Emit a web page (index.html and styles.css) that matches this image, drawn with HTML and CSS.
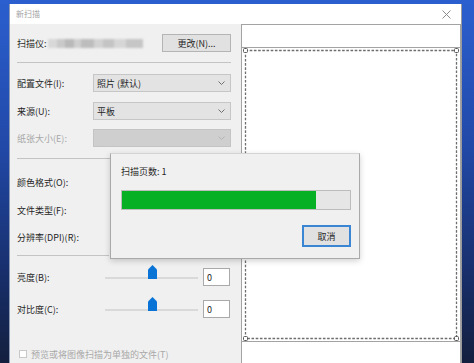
FILE: index.html
```html
<!DOCTYPE html>
<html lang="zh-CN">
<head>
<meta charset="utf-8">
<title>新扫描</title>
<link rel="stylesheet" href="styles.css">
</head>
<body>
<div class="desktop">
  <div class="window">
    <div class="titlebar">
      <span class="title">新扫描</span>
      <svg class="close" width="9" height="9" viewBox="0 0 9 9"><path d="M0.5 0.5 L8.5 8.5 M8.5 0.5 L0.5 8.5" stroke="#8c8c8c" stroke-width="1" fill="none"/></svg>
    </div>
    <div class="content">
      <div class="left">
        <div class="row r-scanner">
          <span class="lbl-short">扫描仪:</span>
          <span class="blurred"></span>
          <span class="btn btn-change">更改(N)...</span>
        </div>
        <div class="sep s1"></div>
        <div class="row r-profile">
          <span class="lbl">配置文件(I):</span>
          <span class="combo"><span class="ctext">照片 (默认)</span><svg class="chev" width="7" height="4" viewBox="0 0 7 4"><path d="M0.5 0.5 L3.5 3.5 L6.5 0.5" stroke="#707070" fill="none"/></svg></span>
        </div>
        <div class="row r-source">
          <span class="lbl">来源(U):</span>
          <span class="combo"><span class="ctext">平板</span><svg class="chev" width="7" height="4" viewBox="0 0 7 4"><path d="M0.5 0.5 L3.5 3.5 L6.5 0.5" stroke="#707070" fill="none"/></svg></span>
        </div>
        <div class="row r-paper">
          <span class="lbl disabled">纸张大小(E):</span>
          <span class="combo combo-dis"><span class="ctext"></span><svg class="chev" width="7" height="4" viewBox="0 0 7 4"><path d="M0.5 0.5 L3.5 3.5 L6.5 0.5" stroke="#b4b4b4" fill="none"/></svg></span>
        </div>
        <div class="sep s2"></div>
        <div class="row r-color"><span class="lbl">颜色格式(O):</span></div>
        <div class="row r-type"><span class="lbl">文件类型(F):</span></div>
        <div class="row r-dpi"><span class="lbl">分辨率(DPI)(R):</span></div>
        <div class="sep s3"></div>
        <div class="row r-bright">
          <span class="lbl">亮度(B):</span>
          <span class="slider"><span class="track"></span><svg class="thumb" width="9" height="14" viewBox="0 0 9 14"><path d="M0 4.5 L4.5 0 L9 4.5 V14 H0 Z" fill="#0a74d6"/></svg></span>
          <span class="numbox">0</span>
        </div>
        <div class="row r-contrast">
          <span class="lbl">对比度(C):</span>
          <span class="slider"><span class="track"></span><svg class="thumb" width="9" height="14" viewBox="0 0 9 14"><path d="M0 4.5 L4.5 0 L9 4.5 V14 H0 Z" fill="#0a74d6"/></svg></span>
          <span class="numbox">0</span>
        </div>
        <div class="row r-check">
          <span class="checkbox"></span>
          <span class="disabled">预览或将图像扫描为单独的文件(T)</span>
        </div>
      </div>
      <div class="preview">
        <div class="pv-top"></div>
        <div class="bed">
          <svg class="area" width="218" height="293" viewBox="0 0 218 293">
            <rect x="3.5" y="2.5" width="211" height="288" fill="none" stroke="#6e6e6e" stroke-width="1.3" stroke-dasharray="2.6 1.6"/>
            <rect x="1.5" y="0.5" width="4" height="4" rx="1" fill="#fff" stroke="#5a5a5a" stroke-width="1"/>
            <rect x="212.5" y="0.5" width="4" height="4" rx="1" fill="#fff" stroke="#5a5a5a" stroke-width="1"/>
            <rect x="1.5" y="288.5" width="4" height="4" rx="1" fill="#fff" stroke="#5a5a5a" stroke-width="1"/>
            <rect x="212.5" y="288.5" width="4" height="4" rx="1" fill="#fff" stroke="#5a5a5a" stroke-width="1"/>
          </svg>
        </div>
      </div>
    </div>
    <div class="progress-dialog">
      <div class="pages">扫描页数: 1</div>
      <div class="bar"><div class="fill" style="width: 85%"></div></div>
      <div class="actions"><span class="btn btn-cancel">取消</span></div>
    </div>
  </div>
</div>
</body>
</html>
```

FILE: styles.css
```css
html, body {
  margin: 0;
  padding: 0;
  width: 474px;
  height: 363px;
  overflow: hidden;
}
body {
  font-family: "Noto Sans CJK SC", "Noto Sans", sans-serif;
  font-size: 9px;
  color: #262626;
}
.desktop {
  width: 474px;
  height: 363px;
  background: linear-gradient(to bottom, #2b5fcf 0%, #2149a8 40%, #182f6c 75%, #141f3e 100%);
  padding: 4px 0 0 9px;
  box-sizing: border-box;
}
.window {
  position: relative;
  width: 453px;
  height: 359px;
  background: #f0f0f0;
  border-left: 1px solid #8e9bb5;
  border-right: 1px solid #9a9a9a;
  box-sizing: border-box;
  display: flex;
  flex-direction: column;
}
.titlebar {
  height: 20px;
  background: #ffffff;
  display: flex;
  align-items: center;
  padding: 0 10px 0 6px;
  flex: none;
}
.title {
  font-size: 8px;
  color: #a4a4a4;
  line-height: 1;
  flex: 1;
}
.close {
  display: block;
}
.content {
  flex: 1;
  display: flex;
  min-height: 0;
}
.left {
  width: 231px;
  padding: 10px 10px 0 7px;
  box-sizing: border-box;
  display: flex;
  flex-direction: column;
  flex: none;
}
.row {
  display: flex;
  align-items: center;
  height: 18px;
  line-height: 1;
  flex: none;
}
.lbl {
  width: 76px;
  flex: none;
  white-space: nowrap;
}
.lbl-short {
  flex: none;
  white-space: nowrap;
  margin-right: 1px;
}
.disabled {
  color: #a8a8a8;
  white-space: nowrap;
}
.blurred {
  width: 95px;
  height: 9px;
  background: linear-gradient(to right, #d8d8d8 0 10%, #c9c9c9 10% 18%, #b9b9b9 18% 27%, #cfcfcf 27% 35%, #bdbdbd 35% 48%, #d2d2d2 48% 58%, #c4c4c4 58% 70%, #d6d6d6 70% 82%, #c6c6c6 82% 100%);
  filter: blur(1.2px);
  flex: none;
}
.btn {
  display: flex;
  align-items: center;
  justify-content: center;
  background: #e1e1e1;
  border: 1px solid #b4b4b4;
  box-sizing: border-box;
  color: #262626;
}
.btn-change {
  margin-left: auto;
  width: 69px;
  height: 18px;
}
.sep {
  height: 1px;
  background: #c3c3c3;
  flex: none;
}
.s1 { margin-top: 10px; }
.s2 { margin-top: 11px; width: 93px; }
.s3 { margin-top: 9px; width: 92px; }
.r-profile { margin-top: 11px; }
.r-source { margin-top: 10px; }
.r-paper { margin-top: 9px; }
.r-color { margin-top: 14px; }
.r-type { margin-top: 10px; }
.r-dpi { margin-top: 9px; }
.r-bright { margin-top: 12px; }
.r-contrast { margin-top: 14px; }
.r-check { margin-top: 27px; padding-left: 2px; }
.combo {
  flex: 1;
  height: 18px;
  background: #e3e3e3;
  border: 1px solid #c6c6c6;
  box-sizing: border-box;
  display: flex;
  align-items: center;
  padding: 0 5px 0 3px;
}
.combo-dis {
  background: #cfcfcf;
  border-color: #c4c4c4;
}
.ctext {
  flex: 1;
}
.chev {
  display: block;
}
.slider {
  position: relative;
  width: 110px;
  height: 18px;
  flex: none;
  padding: 0 5px 0 12px;
  box-sizing: border-box;
  display: flex;
  align-items: center;
}
.track {
  flex: 1;
  height: 2px;
  background: #d9d9d9;
  margin-top: 1px;
}
.thumb {
  position: absolute;
  top: -3px;
  left: 55px;
  display: block;
}
.numbox {
  width: 27px;
  height: 18px;
  background: #ffffff;
  border: 1px solid #a9a9a9;
  box-sizing: border-box;
  display: flex;
  align-items: center;
  padding-left: 3px;
  flex: none;
}
.checkbox {
  width: 8px;
  height: 8px;
  border: 1px solid #c8c8c8;
  background: #ffffff;
  box-sizing: border-box;
  margin-right: 4px;
  flex: none;
}
.preview {
  width: 220px;
  flex: none;
  background: #ffffff;
  border: 1px solid #a3a3a3;
  border-bottom: none;
  box-sizing: border-box;
  display: flex;
  flex-direction: column;
}
.pv-top {
  height: 22px;
  flex: none;
}
.bed {
  border-top: 1px solid #a3a3a3;
  border-bottom: 1px solid #a3a3a3;
  flex: none;
  display: flex;
  padding: 0;
}
.area {
  display: block;
}
.progress-dialog {
  position: absolute;
  left: 100px;
  top: 149px;
  width: 250px;
  height: 106px;
  background: #f0f0f0;
  border: 1px solid #a9a9a9;
  border-top-color: #d4d4d4;
  box-sizing: border-box;
  box-shadow: 0 2px 6px rgba(0, 0, 0, 0.18);
  padding: 12px 8px 0 10px;
  display: flex;
  flex-direction: column;
}
.pages {
  line-height: 12px;
  height: 12px;
}
.bar {
  margin-top: 12px;
  height: 20px;
  background: #e6e6e6;
  border: 1px solid #bcbcbc;
  box-sizing: border-box;
}
.fill {
  height: 100%;
  background: #06b025;
}
.actions {
  margin-top: 15px;
  display: flex;
  justify-content: flex-end;
}
.btn-cancel {
  width: 49px;
  height: 22px;
  border: 2px solid #3a86d4;
  background: #e1e1e1;
}
```
